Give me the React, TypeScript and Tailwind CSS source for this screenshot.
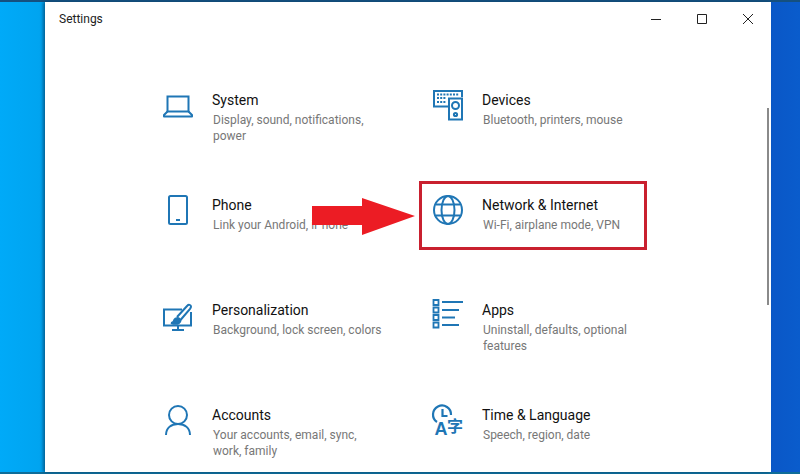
import React from 'react';

const blue = '#1f76b5';

const SystemIcon = () => (
  <svg width="32" height="32" viewBox="0 0 32 32" fill="none" stroke={blue} strokeWidth="2" className="overflow-visible">
    <path d="M5.500 8.500h21v15h-21z" />
    <path d="M5.500 23.500l-3.500 3.500v1.500h28v-1.500l-3.500-3.500" strokeLinejoin="round" />
  </svg>
);

const DevicesIcon = () => (
  <svg width="32" height="32" viewBox="0 0 32 32" fill="none" stroke={blue} strokeWidth="2" className="overflow-visible">
    <path d="M16 18.500H2V3h28v6" />
    <path d="M5 6.500h22M5 10h9M5 14h9" strokeDasharray="2 1.200" />
    <rect x="17" y="10.500" width="13" height="21" />
    <circle cx="23.500" cy="17.500" r="3.500" />
    <circle cx="23.500" cy="26.500" r="1.600" />
  </svg>
);

const PhoneIcon = () => (
  <svg width="32" height="32" viewBox="0 0 32 32" fill="none" stroke={blue} strokeWidth="2" className="overflow-visible">
    <rect x="7" y="3" width="18" height="28" rx="1.500" />
    <path d="M14 27h4" />
  </svg>
);

const GlobeIcon = () => (
  <svg width="32" height="32" viewBox="0 0 32 32" fill="none" stroke={blue} strokeWidth="2" className="overflow-visible">
    <circle cx="16" cy="17" r="14" />
    <ellipse cx="16" cy="17" rx="6.500" ry="14" />
    <path d="M4 11.500h24M4 22.500h24" />
  </svg>
);

const PersonalizationIcon = () => (
  <svg width="32" height="32" viewBox="0 0 32 32" fill="none" stroke={blue} strokeWidth="2" className="overflow-visible">
    <path d="M20 11.500H2v16h27V14" />
    <path d="M16 27.500v4M10 32h12" />
    <path d="M15 19L25.500 7.500c1-1.200 3.500-.8 3.500 1 0 1-.5 1.500-1 2.300L18.500 22" />
    <path d="M9 25c3 0 2.500-1.500 3.500-3.500 1-1.500 3.500-2 5-.5 1.500 1.500 1 3-.5 4-2 1-4.500 1.200-8 0z" fill={blue} />
  </svg>
);

const AppsIcon = () => (
  <svg width="32" height="32" viewBox="0 0 32 32" fill="none" stroke={blue} strokeWidth="2" className="overflow-visible">
    <path d="M10 4h21M10 12h17M10 19.500h13M10 27h17" />
    <path d="M1.500 2h5v5h-5zM1.500 9.500h5v5h-5zM1.500 17h5v5h-5zM1.500 24.500h5v5h-5z" strokeWidth="1.800" />
  </svg>
);

const AccountsIcon = () => (
  <svg width="32" height="32" viewBox="0 0 32 32" fill="none" stroke={blue} strokeWidth="2" className="overflow-visible">
    <circle cx="16" cy="12" r="9" />
    <path d="M4 32c0-7 5-11 12-11s12 4 12 11" />
  </svg>
);

const TimeIcon = () => (
  <svg width="32" height="32" viewBox="0 0 32 32" fill="none" stroke={blue} strokeWidth="2.200" className="overflow-visible">
    <path d="M5 19a9 9 0 1 1 14-7" />
    <path d="M10.500 6v7h5" />
    <text x="2.500" y="32" fontSize="18" fontWeight="700" fontFamily="Liberation Sans, sans-serif" fill={blue} stroke="none">A</text>
    <text x="15" y="29" fontSize="16" fontWeight="700" fontFamily="Noto Sans CJK SC, sans-serif" fill={blue} stroke="none">字</text>
  </svg>
);

const items = [
  { name: 'System', desc: 'Display, sound, notifications, power', icon: <SystemIcon /> },
  { name: 'Devices', desc: 'Bluetooth, printers, mouse', icon: <DevicesIcon /> },
  { name: 'Phone', desc: 'Link your Android, iPhone', icon: <PhoneIcon /> },
  { name: 'Network & Internet', desc: 'Wi-Fi, airplane mode, VPN', icon: <GlobeIcon />, highlight: true },
  { name: 'Personalization', desc: 'Background, lock screen, colors', icon: <PersonalizationIcon /> },
  { name: 'Apps', desc: 'Uninstall, defaults, optional features', icon: <AppsIcon /> },
  { name: 'Accounts', desc: 'Your accounts, email, sync, work, family', icon: <AccountsIcon /> },
  { name: 'Time & Language', desc: 'Speech, region, date', icon: <TimeIcon /> },
];

export default function App() {
  return (
    <div className="relative h-[474px] w-[800px] overflow-hidden bg-[linear-gradient(90deg,#00aaf8_0%,#00a4f0_5%,#0a58c8_97%,#0a5ccc_100%)] pl-[45px] pt-[2px] pb-[2px] font-['Roboto',sans-serif]">
      <div className="absolute inset-x-0 top-0 h-[2px] bg-[#15507f]" />
      <div className="absolute inset-x-0 bottom-0 h-[2px] bg-[#0f6d99]" />
      <div className="relative h-[470px] w-[726px] bg-white shadow-[-2px_0_3px_rgba(5,60,100,0.65)]">
        <div className="flex h-[34px] items-center justify-between pl-[14px]">
          <span className="text-[12px] text-[#222]">Settings</span>
          <div className="flex items-center">
            <button className="flex h-[32px] w-[46px] items-center justify-center">
              <svg width="10" height="10" viewBox="0 0 10 10" stroke="#222" fill="none"><path d="M0 5.500h10" /></svg>
            </button>
            <button className="flex h-[32px] w-[46px] items-center justify-center">
              <svg width="10" height="10" viewBox="0 0 10 10" stroke="#222" fill="none"><path d="M.5.500h9v9h-9z" /></svg>
            </button>
            <button className="flex h-[32px] w-[46px] items-center justify-center">
              <svg width="10" height="10" viewBox="0 0 10 10" stroke="#222" fill="none"><path d="M0 0l10 10M10 0L0 10" /></svg>
            </button>
          </div>
        </div>

        <div className="ml-[117px] mt-[54px] grid w-[540px] grid-cols-[270px_270px] auto-rows-[105px]">
          {items.map((item) => (
            <div key={item.name} className="relative flex gap-[20px]">
              {item.highlight && (
                <div className="absolute left-[-13px] top-[-14px] h-[69px] w-[228px] border-[3px] border-[#c9202f]" />
              )}
              <div className="mt-[-2px] h-[32px] w-[30px] shrink-0">{item.icon}</div>
              <div className="w-[172px]">
                <div className="text-[14px] leading-[20px] text-[#111]">{item.name}</div>
                <div className="mt-[2px] pl-[1px] text-[12px] leading-[16px] text-[#777]">{item.desc}</div>
              </div>
            </div>
          ))}
        </div>

        <div className="absolute left-[722px] top-[106px] h-[197px] w-[2px] bg-[#8a8a8a]" />
      </div>

      <svg className="absolute left-[312px] top-[197px]" width="105" height="39" viewBox="0 0 105 39">
        <path d="M0 9h50V1l53 18-53 19V28H0z" fill="#ec1c24" />
      </svg>
    </div>
  );
}
